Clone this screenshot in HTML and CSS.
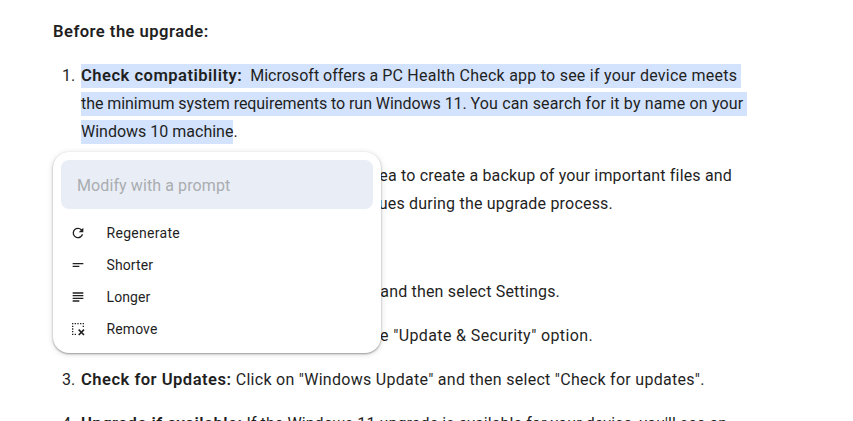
FILE: index.html
```
<!DOCTYPE html>
<html lang="en">
<head>
    <meta charset="utf-8">
    <title>Before the upgrade</title>
    <link rel="stylesheet" href="styles.css">
</head>
<body>
    <div class="doc">
        <h3>Before the upgrade:</h3>
        <ol>
            <li>
                <div class="line l1"><mark><b>Check compatibility:</b>&nbsp; Microsoft offers a <span class="l1-end">PC Health Check app to see if your device meets </span></mark></div>
                <div class="line l2"><mark>the minimum system requirements to run Windows 11. <span class="l2-end">You can search for it by name on your </span></mark></div>
                <div class="line l3"><mark>Windows 10 machine</mark>.</div>
            </li>
            <li>
                <div class="line tail l4"><b>Back up your data:</b> It's always a good idea to create a backup of your important files and</div>
                <div class="line tail l5">documents in case of any issues during the upgrade process.</div>
            </li>
        </ol>
        <h3>Upgrade process:</h3>
        <ol>
            <li><div class="line tail l6"><b>Open Settings:</b> Click on Start and then select Settings.</div></li>
            <li><div class="line tail l7"><b>Update &amp; Security:</b> Find the "Update &amp; Security" option.</div></li>
            <li><div class="line l8"><b>Check for Updates:</b> Click on "Windows Update" and then select "Check for updates".</div></li>
            <li><div class="line l9"><b>Upgrade if available:</b> If the Windows 11 upgrade is available for your device, you'll see an</div></li>
        </ol>
    </div>

    <div class="popup">
        <input class="prompt" type="text" placeholder="Modify with a prompt">
        <div class="item">
            <svg viewBox="0 0 24 24"><path d="M17.65 6.35A7.96 7.96 0 0 0 12 4a8 8 0 1 0 7.73 10h-2.08A6 6 0 1 1 12 6c1.66 0 3.14.69 4.22 1.78L13 11h7V4z"/></svg>
            <span class="regenerate">Regenerate</span>
        </div>
        <div class="item">
            <svg viewBox="0 0 24 24"><path d="M4 9h16v2H4zM4 13h10v2H4z"/></svg>
            <span>Shorter</span>
        </div>
        <div class="item">
            <svg viewBox="0 0 24 24"><path d="M4 5h16v2H4zM4 9h16v2H4zM4 13h16v2H4zM4 17h10v2H4z"/></svg>
            <span>Longer</span>
        </div>
        <div class="item">
            <svg viewBox="0 0 24 24"><path d="M3 3h2v2H3zM7 3h2v2H7zM11 3h2v2h-2zM15 3h2v2h-2zM19 3h2v2h-2zM3 7h2v2H3zM3 11h2v2H3zM3 15h2v2H3zM3 19h2v2H3zM7 19h2v2H7zM19 7h2v2h-2z"/><path class="cross" d="M13 13l8 8M21 13l-8 8"/></svg>
            <span>Remove</span>
        </div>
    </div>
</body>
</html>
```

FILE: styles.css
```
body {
    margin: 0;
    background: #fff;
    color: #1f1f1f;
    font-family: Roboto, sans-serif;
    font-size: 16px;
    line-height: 28px;
}
.doc {
    box-sizing: border-box;
    height: 421px;
    overflow: hidden;
    padding: 18px 0 0 53px;
}
h3 {
    margin: 0 0 16px;
    font-size: 16.6px;
    font-weight: 600;
    letter-spacing: 0.46px;
}
ol {
    margin: 0;
    padding: 0;
    list-style: none;
    counter-reset: step;
}
li {
    display: grid;
    grid-template-columns: 28px 1fr;
    margin-bottom: 16px;
    counter-increment: step;
}
li::before {
    content: counter(step) ".";
    grid-row: 1;
    padding-left: 9px;
}
.line {
    grid-column: 2;
    height: 28px;
    white-space: pre;
}
.line b {
    font-size: 16.6px;
    font-weight: 600;
    letter-spacing: 0.47px;
}
mark {
    padding: 2px 0 3px;
    background: #d3e3fd;
    color: inherit;
}
.l1 { letter-spacing: 0.02px; }
.l1-end { letter-spacing: 0.24px; }
.l2 { letter-spacing: -0.06px; }
.l2-end { letter-spacing: 0.15px; }
.l8 { letter-spacing: 0.28px; }
.l9 { letter-spacing: 0.08px; }

/* partly covered by the popup, aligned on their right edge */
.tail {
    text-align: right;
}
.l4 { width: 651px; letter-spacing: 0.17px; }
.l5 { width: 532px; letter-spacing: 0.2px; }
.l6 { width: 479px; letter-spacing: 0.18px; }
.l7 { width: 512px; letter-spacing: 0.37px; }

.popup {
    position: absolute;
    left: 53px;
    top: 152px;
    box-sizing: border-box;
    width: 328px;
    height: 201px;
    padding: 8px;
    border-radius: 16px;
    background: #fff;
    box-shadow: 0 1px 2px rgba(0, 0, 0, 0.35), 0 1px 6px rgba(0, 0, 0, 0.15);
}
.prompt {
    display: block;
    box-sizing: border-box;
    width: 312px;
    height: 49px;
    margin-bottom: 8px;
    padding: 2px 16px 0;
    border: 0;
    border-radius: 8px;
    background: #e9eef6;
    font: 16px Roboto, sans-serif;
    letter-spacing: 0.1px;
}
.prompt::placeholder {
    color: #a9acb0;
}
.item {
    display: flex;
    align-items: center;
    gap: 20.5px;
    height: 32px;
    padding-left: 9px;
    font-size: 14px;
    letter-spacing: 0.1px;
}
.regenerate {
    letter-spacing: 0.3px;
}
.item svg {
    width: 16px;
    height: 16px;
    fill: #1f1f1f;
}
.cross {
    fill: none;
    stroke: #1f1f1f;
    stroke-width: 2.4;
}
```
